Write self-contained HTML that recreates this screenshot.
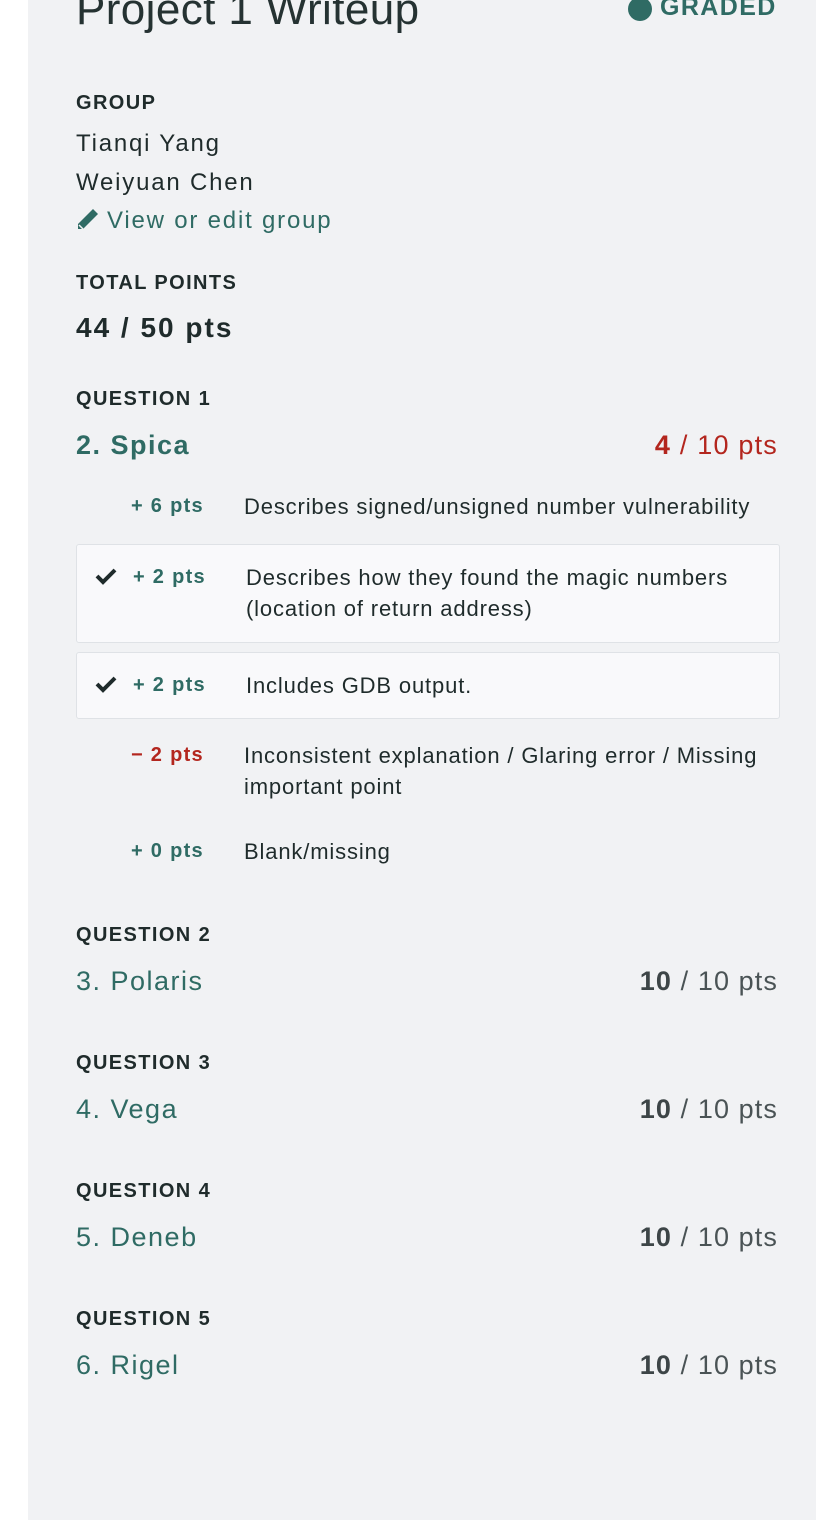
<!DOCTYPE html>
<html><head><meta charset="utf-8"><style>
body{margin:0;width:816px;height:1520px;background:#fff;font-family:"Liberation Sans",sans-serif;color:#1f2b2b;position:relative;overflow:hidden}
.panel{position:absolute;left:28px;top:0;width:788px;height:1520px;background:#f1f2f4}
.a{position:absolute;white-space:nowrap}
.lbl{font-size:20px;font-weight:bold;letter-spacing:1.4px}
.txt{font-size:24px;letter-spacing:1.8px}
.teal{color:#2f6b64}
.red{color:#b3261e}
.q{font-size:27px;letter-spacing:1.5px}
.pts{font-size:27px;color:#4a5355;letter-spacing:1.1px;right:38px}
.pts b{color:#3d4547}
.rp{font-size:20px;font-weight:bold;letter-spacing:1.3px}
.rd{font-size:22px;letter-spacing:0.85px;line-height:31px;white-space:normal}
.box{position:absolute;left:76px;width:702px;background:#f9f9fb;border:1.5px solid #dfe2e6;border-radius:3px}
</style></head><body>
<div class="panel"></div>
<div class="a" style="left:76px;top:-15px;font-size:44px;font-weight:300;color:#253232;letter-spacing:0.4px">Project 1 Writeup</div>
<div class="a" style="left:628px;top:-3px;width:24px;height:24px;border-radius:50%;background:#2f6b64"></div>
<div class="a teal" style="left:660px;top:-7px;font-size:25px;font-weight:bold;letter-spacing:1.4px">GRADED</div>

<div class="a lbl" style="left:76px;top:92px">GROUP</div>
<div class="a txt" style="left:76px;top:130px">Tianqi Yang</div>
<div class="a txt" style="left:76px;top:169px">Weiyuan Chen</div>
<svg class="a" style="left:76px;top:208px" width="24" height="25" viewBox="0 0 24 25"><path d="M17 1l5 5L7 21H2v-5z" fill="#2f6b64"/><path d="M3 17l4 4" stroke="#f1f2f4" stroke-width="1.5"/></svg>
<div class="a txt teal" style="left:107px;top:207px;letter-spacing:1.8px">View or edit group</div>

<div class="a lbl" style="left:76px;top:272px">TOTAL POINTS</div>
<div class="a" style="left:76px;top:312px;font-size:28px;font-weight:bold;letter-spacing:2px">44 / 50 pts</div>

<div class="a lbl" style="left:76px;top:388px">QUESTION 1</div>
<div class="a q teal" style="left:76px;top:430px;font-weight:bold">2. Spica</div>
<div class="a red" style="right:38px;top:430px;font-size:27px;letter-spacing:1.2px"><b>4</b> / 10 pts</div>

<div class="a rp teal" style="right:612px;top:495px">+ 6 pts</div>
<div class="a rd" style="left:244px;top:491px">Describes signed/unsigned number vulnerability</div>

<div class="box" style="top:544px;height:97px"></div>
<svg class="a" style="left:95px;top:567px" width="22" height="18" viewBox="0 0 22 18"><path d="M2 9l6 6L20 3" stroke="#1f2b2b" stroke-width="4" fill="none"/></svg>
<div class="a rp teal" style="right:610px;top:566px">+ 2 pts</div>
<div class="a rd" style="left:246px;top:562px;width:520px">Describes how they found the magic numbers (location of return address)</div>

<div class="box" style="top:652px;height:65px"></div>
<svg class="a" style="left:95px;top:675px" width="22" height="18" viewBox="0 0 22 18"><path d="M2 9l6 6L20 3" stroke="#1f2b2b" stroke-width="4" fill="none"/></svg>
<div class="a rp teal" style="right:610px;top:674px">+ 2 pts</div>
<div class="a rd" style="left:246px;top:670px">Includes GDB output.</div>

<div class="a rp red" style="right:612px;top:744px">− 2 pts</div>
<div class="a rd" style="left:244px;top:740px;width:530px">Inconsistent explanation / Glaring error / Missing important point</div>

<div class="a rp teal" style="right:612px;top:840px">+ 0 pts</div>
<div class="a rd" style="left:244px;top:836px">Blank/missing</div>

<div class="a lbl" style="left:76px;top:924px">QUESTION 2</div>
<div class="a q teal" style="left:76px;top:966px">3. Polaris</div>
<div class="a pts" style="top:966px"><b>10</b> / 10 pts</div>

<div class="a lbl" style="left:76px;top:1052px">QUESTION 3</div>
<div class="a q teal" style="left:76px;top:1094px">4. Vega</div>
<div class="a pts" style="top:1094px"><b>10</b> / 10 pts</div>

<div class="a lbl" style="left:76px;top:1180px">QUESTION 4</div>
<div class="a q teal" style="left:76px;top:1222px">5. Deneb</div>
<div class="a pts" style="top:1222px"><b>10</b> / 10 pts</div>

<div class="a lbl" style="left:76px;top:1308px">QUESTION 5</div>
<div class="a q teal" style="left:76px;top:1350px">6. Rigel</div>
<div class="a pts" style="top:1350px"><b>10</b> / 10 pts</div>
</body></html>
